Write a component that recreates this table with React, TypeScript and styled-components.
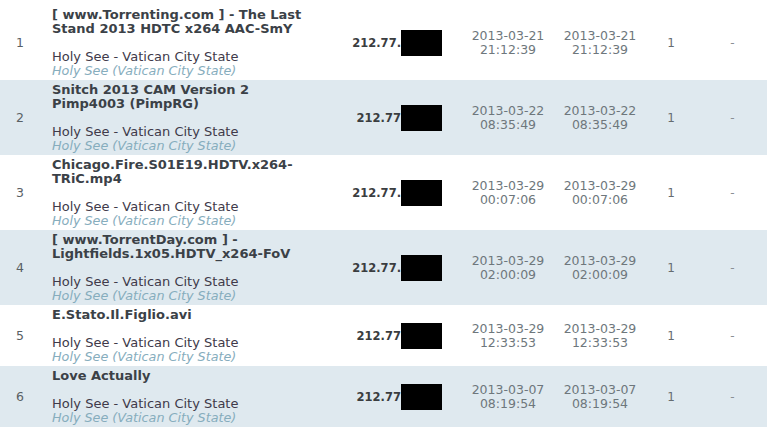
import React from 'react';
import styled, { createGlobalStyle } from 'styled-components';

// ─── Data ───────────────────────────────────────────────────────────────────

type Download = {
  title: string;
  ip: string;
  first: [string, string];
  last: [string, string];
  count: number;
};

const rows: Download[] = [
  { title: '[ www.Torrenting.com ] - The Last Stand 2013 HDTC x264 AAC-SmY', ip: '212.77.', first: ['2013-03-21', '21:12:39'], last: ['2013-03-21', '21:12:39'], count: 1 },
  { title: 'Snitch 2013 CAM Version 2 Pimp4003 (PimpRG)', ip: '212.77', first: ['2013-03-22', '08:35:49'], last: ['2013-03-22', '08:35:49'], count: 1 },
  { title: 'Chicago.Fire.S01E19.HDTV.x264-TRiC.mp4', ip: '212.77.', first: ['2013-03-29', '00:07:06'], last: ['2013-03-29', '00:07:06'], count: 1 },
  { title: '[ www.TorrentDay.com ] - Lightfields.1x05.HDTV_x264-FoV', ip: '212.77.', first: ['2013-03-29', '02:00:09'], last: ['2013-03-29', '02:00:09'], count: 1 },
  { title: 'E.Stato.Il.Figlio.avi', ip: '212.77', first: ['2013-03-29', '12:33:53'], last: ['2013-03-29', '12:33:53'], count: 1 },
  { title: 'Love Actually', ip: '212.77', first: ['2013-03-07', '08:19:54'], last: ['2013-03-07', '08:19:54'], count: 1 },
];

// ─── Styled components ───────────────────────────────────────────────────────

const Global = createGlobalStyle`
  html, body {
    margin: 0;
    padding: 0;
    background: #fff;
  }
`;

const List = styled.div`
  font-family: 'DejaVu Sans', Verdana, sans-serif;
  width: 767px;
  padding-top: 5px;
`;

const Row = styled.div<{ $alt: boolean }>`
  display: grid;
  grid-template-columns: 40px 280px 140px 96px 88px 54px 69px;
  align-items: center;
  background: ${({ $alt }) => ($alt ? '#dfe9ef' : '#fff')};
`;

const Num = styled.div`
  text-align: center;
  font-size: 12.5px;
  color: #596064;
`;

const Info = styled.div`
  padding: 3px 10px 2px 12px;
  line-height: 14px;
`;

const Title = styled.div`
  font-size: 13px;
  font-weight: 700;
  color: #3b4147;
  margin-bottom: 14px;
`;

const Location = styled.div`
  font-size: 13px;
  color: #403a4a;
`;

const Region = styled.div`
  font-size: 12.75px;
  font-style: italic;
  color: #86adbd;
`;

const IpCell = styled.div`
  display: flex;
  justify-content: flex-end;
  align-items: center;
  padding-right: 18px;
  font-size: 11.5px;
  font-weight: 700;
  color: #3a3d40;
`;

const Redact = styled.span`
  display: inline-block;
  width: 41px;
  height: 26px;
  background: #000;
`;

const DateCell = styled.div`
  text-align: center;
  font-size: 12.5px;
  line-height: 14px;
  color: #6e777c;
`;

const Count = styled.div`
  text-align: center;
  font-size: 12px;
  color: #666c70;
`;

const Dash = styled.div`
  text-align: center;
  font-size: 12px;
  color: #8a9094;
`;

// ─── Component ───────────────────────────────────────────────────────────────

export default function App() {
  return (
    <>
      <Global />
      <List>
        {rows.map((r, i) => (
          <Row key={i} $alt={i % 2 === 1}>
            <Num>{i + 1}</Num>
            <Info>
              <Title>{r.title}</Title>
              <Location>Holy See - Vatican City State</Location>
              <Region>Holy See (Vatican City State)</Region>
            </Info>
            <IpCell>
              {r.ip}
              <Redact />
            </IpCell>
            <DateCell>
              {r.first[0]}
              <br />
              {r.first[1]}
            </DateCell>
            <DateCell>
              {r.last[0]}
              <br />
              {r.last[1]}
            </DateCell>
            <Count>{r.count}</Count>
            <Dash>-</Dash>
          </Row>
        ))}
      </List>
    </>
  );
}
